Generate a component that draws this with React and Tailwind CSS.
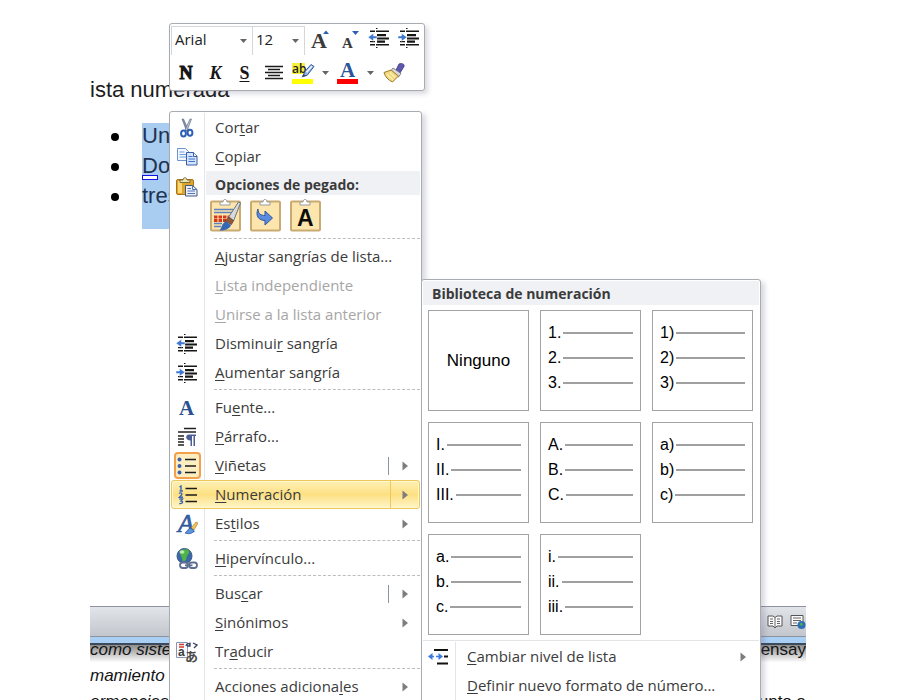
import React from "react";

/* ---------- small glyphs ---------- */

const Caret = ({ className = "" }) => (
  <svg width="7" height="4" viewBox="0 0 7 4" className={className} aria-hidden="true">
    <path d="M0 0h7L3.5 4z" fill="#666" />
  </svg>
);

const Arrow = () => (
  <svg width="6" height="10" viewBox="0 0 6 10" aria-hidden="true">
    <path d="M0.5 0.5L6 5L0.5 9.500z" fill="#7d7d7d" />
  </svg>
);

const Indent = ({ more = false }) => (
  <svg width="22" height="20" viewBox="0 0 22 20" aria-hidden="true">
    <path
      d="M8 0h1.500v1H8zM8 19h1.500v1H8zM2 2.500h5V4H2zM8 2.500h13V4H8zM9 6h9v2.200H9zM9 9.500h12v2H9zM9 12.600h8v2.200H9zM2 16h5v1.500H2zM8 16h13v1.500H8zM2 13h5v1.200H2z"
      fill="#161616"
    />
    {more ? (
      <path d="M0 8h3.500V5.200L9 9.300l-5.500 4v-2.800H0z" fill="#3f78d0" stroke="#fff" strokeWidth="0.500" />
    ) : (
      <path d="M9 8H5.500V5.200L0 9.300l5.500 4v-2.800H9z" fill="#3f78d0" stroke="#fff" strokeWidth="0.500" />
    )}
  </svg>
);

const Serif = ({ size, fill, x, y, children, italic, bold = true, stroke }) => (
  <text
    x={x}
    y={y}
    fontFamily="Liberation Serif, serif"
    fontSize={size}
    fontWeight={bold ? 700 : 400}
    fontStyle={italic ? "italic" : "normal"}
    fill={fill}
    stroke={stroke}
    strokeWidth="0.700"
  >
    {children}
  </text>
);

const GrowFont = () => (
  <svg width="22" height="22" viewBox="0 0 22 22" aria-hidden="true">
    <Serif size="22" x="2" y="19" fill="#3a3a3a">A</Serif>
    <path d="M14 5L17 1.500L20 5z" fill="#2f5fb5" />
  </svg>
);
const ShrinkFont = () => (
  <svg width="22" height="22" viewBox="0 0 22 22" aria-hidden="true">
    <Serif size="15" x="3" y="19" fill="#3a3a3a">A</Serif>
    <path d="M13 2h7l-3.500 4z" fill="#2f5fb5" />
  </svg>
);
const Center = () => (
  <svg width="20" height="16" viewBox="0 0 20 16" aria-hidden="true">
    <path d="M1 1.500h18M4 4.500h12M1 7.500h18M4 10.500h12M1 13.500h18" stroke="#1b1b1b" strokeWidth="1.500" />
  </svg>
);
const Highlighter = () => (
  <svg width="23" height="22" viewBox="0 0 23 22" aria-hidden="true">
    <rect x="0" y="1" width="13" height="11" fill="#f6f03c" />
    <text x="0" y="11" fontFamily="Open Sans, sans-serif" fontSize="12" fontWeight="600" fill="#222">ab</text>
    <path d="M11 14l2-4.500 6-7 3 2-7 9z" fill="#8fb1e3" stroke="#355a9a" strokeWidth="1" />
    <path d="M14 9.500l5.500-6 1 1-5.500 6.500z" fill="#eef4ff" />
    <path d="M9.500 15.500l2-3.500 2.500 2z" fill="#39445c" />
    <rect x="0" y="17" width="21" height="5" fill="#ffff00" />
  </svg>
);
const FontColor = () => (
  <svg width="22" height="22" viewBox="0 0 22 22" aria-hidden="true">
    <Serif size="21" x="3" y="15" fill="#2b549c">A</Serif>
    <rect x="0" y="17" width="21" height="5" fill="#f00" />
  </svg>
);
const FormatBrush = () => (
  <svg width="22" height="20" viewBox="0 0 22 20" aria-hidden="true">
    <path d="M13 7l3-6c2-1.500 6 0 5 2.500l-4 6.500z" fill="#5e58ad" stroke="#3b3780" strokeWidth="0.800" />
    <path d="M10 5l8 5.500-2.500 3.500-8-5.500z" fill="#d9dbe0" stroke="#6b6b75" strokeWidth="0.800" />
    <path d="M8 7L1 9.500c1 4 4 7.500 8.500 9.500l6-6z" fill="#f2d87c" stroke="#9c7a2a" strokeWidth="1" />
    <path d="M4 11l6 6M7 9.500l5 5" stroke="#fbf0bd" strokeWidth="1.200" />
  </svg>
);

const Scissors = () => (
  <svg width="16" height="20" viewBox="0 0 16 20" aria-hidden="true">
    <path d="M3 1l1.500 0 5 11-2 1z" fill="#8592a8" stroke="#566580" strokeWidth="0.600" />
    <path d="M12.500 1L11 1 6 12l2 1z" fill="#b9c3d3" stroke="#566580" strokeWidth="0.600" />
    <ellipse cx="4.500" cy="15.500" rx="2.400" ry="3" fill="none" stroke="#2e5fb4" strokeWidth="2" />
    <ellipse cx="11" cy="14.800" rx="2.400" ry="3" fill="none" stroke="#2e5fb4" strokeWidth="2" />
  </svg>
);
const Copy = () => (
  <svg width="21" height="19" viewBox="0 0 21 19" aria-hidden="true">
    <path d="M.5 1.500h8l3 3v9H.5z" fill="#f2f7ff" stroke="#6f93cc" />
    <path d="M2.500 5h5M2.500 7.500h7M2.500 10h7" stroke="#6f9be0" />
    <path d="M9.500 5.500h7l3.500 3.500v9H9.500z" fill="#d5e3fd" stroke="#3b5fa5" />
    <path d="M16.500 5.500v4H20" fill="#fff" stroke="#3b5fa5" />
    <path d="M11.500 9.500h4M11.500 12h6.500M11.500 14.500h6.500" stroke="#3d74d0" />
  </svg>
);
const Paste = () => (
  <svg width="22" height="20" viewBox="0 0 22 20" aria-hidden="true">
    <rect x="0.500" y="2.500" width="17" height="15" rx="1.500" fill="#dfa52a" stroke="#a9741a" />
    <path d="M2 4h4v12H2z" fill="#f8d976" />
    <path d="M4 5.500V3h3c0-3 4-3 4 0h3v2.500z" fill="#ebe3b4" stroke="#6f6530" strokeWidth="0.900" />
    <path d="M9.500 8.500h7l4.500 4v6.500H9.500z" fill="#e9effa" stroke="#43567c" />
    <path d="M16.500 8.500v4H21M11.500 11.500h3.500M11.500 14h7.500M11.500 16.500h7.500" fill="none" stroke="#5575ad" />
  </svg>
);

const Board = ({ children }) => (
  <svg width="32" height="33" viewBox="0 0 32 33" aria-hidden="true">
    <rect x="2" y="2.500" width="29" height="29" rx="1" fill="#fde5ae" stroke="#c9ab72" strokeWidth="2" />
    <path d="M11 6V3h3c0-3.500 4-3.500 4 0h3v3z" fill="#fff" stroke="#9a9a9a" />
    {children}
  </svg>
);
const KeepFormat = () => (
  <Board>
    <path d="M5 10.500h19M5 13.500h19M5 24.500h8M5 27.500h7" stroke="#5f83bd" strokeWidth="1.400" />
    <path d="M5 18h17M5 21.500h12" fill="none" stroke="#d5391c" strokeWidth="2.800" strokeDasharray="3.500 1" />
    <path d="M19 19L29.500 3l2 1-7 18z" fill="#d7dadd" stroke="#6f7378" />
    <path d="M16 22l4-4 4.500 3.500-2 4z" fill="#8e5a3a" stroke="#5d3a26" strokeWidth="0.700" />
    <path d="M10 31.500c3-1 2-7.500 7-9l5 3.500c-1 4-7 6-12 5.500z" fill="#3567b7" />
  </Board>
);
const MergeFormat = () => (
  <Board>
    <path d="M9 10c0 5 3 6.500 7 6.500V12l7.500 7-7.500 7v-4.500C10 21.500 6 17 9 10z" fill="#5b8be0" stroke="#2d569f" />
  </Board>
);
const TextOnly = () => (
  <Board>
    <text x="8" y="27" fontFamily="Liberation Sans, sans-serif" fontSize="23" fontWeight="700" fill="#0c0c0c">A</text>
  </Board>
);

const FontIcon = () => (
  <svg width="20" height="20" viewBox="0 0 20 20" aria-hidden="true">
    <Serif size="21" x="2" y="17" fill="#2c4f90">A</Serif>
  </svg>
);
const Paragraph = () => (
  <svg width="20" height="20" viewBox="0 0 20 20" aria-hidden="true">
    <path d="M7 1.500h12M1 5h18M1 9h6M1 12h6M1 15h6M1 18h6" stroke="#222" strokeWidth="1.500" />
    <path d="M12 7.500h7V9h-1v10h-1.500V9H15v10h-1.500v-5.500C8 13.500 8 7.500 12 7.500z" fill="#4a5f96" />
  </svg>
);
const Bullets = () => (
  <svg width="20" height="20" viewBox="0 0 20 20" aria-hidden="true">
    <path d="M8 3.500h11M8 10h11M8 16.500h11" stroke="#1d1d1d" strokeWidth="1.700" />
    <g fill="#3c5fae">
      <circle cx="2.500" cy="3.500" r="2" />
      <circle cx="2.500" cy="10" r="2" />
      <circle cx="2.500" cy="16.500" r="2" />
    </g>
  </svg>
);
const Numbers = () => (
  <svg width="20" height="20" viewBox="0 0 20 20" aria-hidden="true">
    <path d="M7.500 3.500H19M7.500 10H19M7.500 16.500H19" stroke="#1d1d1d" strokeWidth="1.700" />
    <path
      d="M1.500 2L3 1v5M1.500 6h3.500M1 8.500c2-1.500 3.500 0 2.500 1.500L1.500 12.200H5M1.200 14h3.300L3 16c2.500 0 2 3-1.800 2.600"
      fill="none"
      stroke="#3c68b8"
      strokeWidth="1.400"
    />
  </svg>
);
const Styles = () => (
  <svg width="22" height="22" viewBox="0 0 22 22" aria-hidden="true">
    <Serif size="26" x="2" y="19" fill="#3463ad" stroke="#2f5494" italic bold={false}>A</Serif>
    <path d="M15 15l5-6 2 1-4 7z" fill="#efc35c" stroke="#a5782a" strokeWidth="0.600" />
    <path d="M9 20c2-1 3-5 6-5l3 2.500c-1 3-5 4-9 2.500z" fill="#5a93de" stroke="#2c5596" strokeWidth="0.800" />
  </svg>
);
const Globe = () => (
  <svg width="22" height="22" viewBox="0 0 22 22" aria-hidden="true">
    <circle cx="8.500" cy="8" r="7.500" fill="#3a68a8" stroke="#3c5a86" />
    <path d="M5 2.500c3-2 7-1.500 8 .5s-1 3-2 5 0 4-2.500 5-2-2-3-4-2-4-.5-6.500z" fill="#4fb345" />
    <ellipse cx="6" cy="4" rx="2.500" ry="1.800" fill="#b8ecb0" />
    <g fill="#fff" stroke="#5f6f92" strokeWidth="1.800">
      <rect x="4" y="14.500" width="8" height="5.500" rx="2.700" />
      <rect x="13" y="14.500" width="8" height="5.500" rx="2.700" />
      <path d="M9 17.300h7.500" />
    </g>
  </svg>
);
const Translate = () => (
  <svg width="22" height="22" viewBox="0 0 22 22" aria-hidden="true">
    <path d="M.5 1.500h11v15H.5z" fill="#f7f9fd" stroke="#8796b3" />
    <path d="M3 3.500h5M3 6h5" stroke="#d13a2c" strokeWidth="1.400" />
    <text x="2" y="15" fontFamily="Liberation Sans, sans-serif" fontSize="12" fontWeight="700" fill="#3c3c3c">a</text>
    <path d="M10 5c1-3 3-3 4-1M14 1.500V5h-3M17 2l4 2-3 3" fill="none" stroke="#33415f" strokeWidth="1.300" />
    <text x="9" y="20" fontFamily="Noto Sans CJK JP, sans-serif" fontSize="13" fontWeight="700" fill="#4a4a4a">あ</text>
  </svg>
);
const ListLevel = () => (
  <svg width="21" height="18" viewBox="0 0 21 18" aria-hidden="true">
    <path d="M6 2h14M16 8.500h4M9 15.500h11" stroke="#111" strokeWidth="1.800" />
    <path d="M0 8.500L4.500 5v2.700h1.500v1.600H4.500V12zM15 8.500L10.500 5v2.700H8v1.600h2.500V12z" fill="#3f78e0" />
  </svg>
);
const Book = () => (
  <svg width="16" height="16" viewBox="0 0 16 16" aria-hidden="true">
    <path d="M1 2h5l2 1.500L10 2h5v10h-5l-2 2-2-2H1z" fill="#fafafa" stroke="#555" />
    <path d="M8 3.500V14M3 5h3M3 7.500h3M3 9.500h3M10 5h3M10 7.500h3M10 9.500h3" stroke="#666" />
  </svg>
);
const WebLayout = () => (
  <svg width="16" height="16" viewBox="0 0 16 16" aria-hidden="true">
    <path d="M1 1.500h12v10H1z" fill="#fafafa" stroke="#555" />
    <path d="M3 4h8M3 6.500h8M3 9h4" stroke="#666" />
    <circle cx="11.500" cy="11" r="4" fill="#2f6fb5" />
    <path d="M9.500 9.500c2-1.500 4 0 3 1.500s-2 1-3-1.500z" fill="#56b04a" />
  </svg>
);

/* ---------- menu parts ---------- */

/* The letter after "&" is the access key. */
const Label = ({ text }) => {
  const i = text.indexOf("&");
  if (i < 0) return <span>{text}</span>;
  return (
    <span>
      {text.slice(0, i)}
      <span className="underline decoration-1 underline-offset-2">{text[i + 1]}</span>
      {text.slice(i + 2)}
    </span>
  );
};

const Gutter = ({ children, className = "w-[35px]" }) => (
  <span className={`flex shrink-0 items-center justify-center self-stretch border-r border-[#e2e4e7] ${className}`}>
    {children}
  </span>
);

const Item = ({ icon, text, disabled, arrow, split, checked }) => (
  <button
    type="button"
    role="menuitem"
    disabled={disabled}
    className={`flex h-[29px] w-full items-center text-left ${disabled ? "text-[#a6a6a6]" : ""}`}
  >
    <Gutter>
      {checked ? (
        <span className="flex size-[27px] shrink-0 items-center justify-center rounded border-2 border-[#f2a04c] bg-[#fdeec2]">
          {icon}
        </span>
      ) : (
        icon
      )}
    </Gutter>
    <span className="flex-1 pl-[10px]">
      <Label text={text} />
    </span>
    {split && <span className="h-[18px] w-px bg-[#8a94a3]" />}
    {arrow && (
      <span className="flex w-8 items-center justify-center">
        <Arrow />
      </span>
    )}
  </button>
);

const ActiveItem = ({ icon, text }) => (
  <button
    type="button"
    role="menuitem"
    className="mx-px flex h-[29px] items-stretch self-stretch rounded-[3px] border border-[#ecc75a] bg-linear-to-b from-[#fef0b4] via-[#fde082] to-[#fff5c8] text-left inset-ring inset-ring-[#fff6d2]"
  >
    <span className="flex w-8 items-center justify-center">{icon}</span>
    <span className="flex flex-1 items-center pl-[11px]">
      <Label text={text} />
    </span>
    <span className="flex w-[29px] items-center justify-center border-l border-[#ecc75a]">
      <Arrow />
    </span>
  </button>
);

const Separator = () => (
  <div role="separator" className="flex h-[6px]">
    <Gutter />
    <span className="mt-[2px] ml-[9px] mr-px h-0 flex-1 border-t border-dashed border-[#bdbdbd]" />
  </div>
);

const ToolButton = ({ label, className, children }) => (
  <button type="button" aria-label={label} className={`flex h-7 items-center justify-center ${className}`}>
    {children}
  </button>
);

const Combo = ({ label, value, className }) => (
  <div className={`relative h-[29px] border border-[#d3d6db] ${className}`}>
    <select
      aria-label={label}
      defaultValue={value}
      className="size-full appearance-none bg-white pb-1 pl-[3px] text-[15px] text-[#222] outline-none"
    >
      <option>{value}</option>
    </select>
    <Caret className="pointer-events-none absolute top-3 right-[5px]" />
  </div>
);

const MiniToolbar = () => (
  <div
    role="toolbar"
    aria-label="Formato"
    className="absolute top-[23px] left-[169px] flex w-[256px] flex-col rounded-[3px] border border-[#a7abb2] bg-white px-px pt-[2px] pb-[3px] shadow-[3px_3px_5px_rgba(90,80,120,0.22)]"
  >
    <div className="flex items-start">
      <Combo label="Fuente" value="Arial" className="w-[82px]" />
      <Combo label="Tamaño" value="12" className="-ml-px w-[53px]" />
      <ToolButton label="Agrandar fuente" className="w-[30px]"><GrowFont /></ToolButton>
      <ToolButton label="Encoger fuente" className="w-[29px]"><ShrinkFont /></ToolButton>
      <ToolButton label="Disminuir sangría" className="w-[30px] pb-1"><Indent /></ToolButton>
      <ToolButton label="Aumentar sangría" className="w-[29px] pb-1"><Indent more /></ToolButton>
    </div>
    <div className="mt-1 flex items-center font-['Liberation_Serif',serif] text-[18px] font-bold text-[#161616]">
      <ToolButton label="Negrita" className="w-[30px] [-webkit-text-stroke:1px_#161616]">N</ToolButton>
      <ToolButton label="Cursiva" className="w-[29px] italic">K</ToolButton>
      <ToolButton label="Subrayado" className="w-[29px] underline underline-offset-2">S</ToolButton>
      <ToolButton label="Centrar" className="w-[29px]"><Center /></ToolButton>
      <ToolButton label="Resaltado" className="w-[30px]"><Highlighter /></ToolButton>
      <ToolButton label="Más resaltado" className="w-[15px]"><Caret /></ToolButton>
      <ToolButton label="Color de fuente" className="w-[30px]"><FontColor /></ToolButton>
      <ToolButton label="Más colores" className="w-[15px]"><Caret /></ToolButton>
      <ToolButton label="Copiar formato" className="w-[32px]"><FormatBrush /></ToolButton>
    </div>
  </div>
);

const ContextMenu = () => (
  <div
    role="menu"
    className="absolute top-[111px] left-[169px] flex w-[253px] flex-col rounded-t-[3px] border border-[#a7abb2] bg-white pt-px text-[15px] shadow-[4px_3px_5px_rgba(90,80,120,0.22)]"
  >
    <Item icon={<Scissors />} text="Cor&tar" />
    <Item icon={<Copy />} text="&Copiar" />
    <div className="flex">
      <Gutter>
        <span className="self-start pt-[6px]"><Paste /></span>
      </Gutter>
      <div className="flex-1">
        <div className="mr-px ml-px flex h-6 items-center bg-[#eff1f5] pt-[2px] pl-[9px] text-[14px] font-bold">
          Opciones de pegado:
        </div>
        <div className="flex h-[41px] items-center gap-2 pl-1">
          <button type="button" aria-label="Mantener formato de origen"><KeepFormat /></button>
          <button type="button" aria-label="Combinar formato"><MergeFormat /></button>
          <button type="button" aria-label="Mantener solo texto"><TextOnly /></button>
        </div>
      </div>
    </div>
    <Separator />
    <Item text="&Ajustar sangrías de lista..." />
    <Item text="&Lista independiente" disabled />
    <Item text="&Unirse a la lista anterior" disabled />
    <Item icon={<Indent />} text="Disminui&r sangría" />
    <Item icon={<Indent more />} text="&Aumentar sangría" />
    <Separator />
    <Item icon={<FontIcon />} text="Fu&ente..." />
    <Item icon={<Paragraph />} text="&Párrafo..." />
    <Item icon={<Bullets />} text="&Viñetas" arrow split checked />
    <ActiveItem icon={<Numbers />} text="&Numeración" />
    <Item icon={<Styles />} text="Es&tilos" arrow />
    <Separator />
    <Item icon={<Globe />} text="&Hipervínculo..." />
    <Separator />
    <Item text="Bus&car" arrow split />
    <Item text="&Sinónimos" arrow />
    <Item icon={<Translate />} text="Tr&aducir" />
    <Separator />
    <Item text="Acciones adiciona&les" arrow />
  </div>
);

const FORMATS = [
  ["1.", "2.", "3."],
  ["1)", "2)", "3)"],
  ["I.", "II.", "III."],
  ["A.", "B.", "C."],
  ["a)", "b)", "c)"],
  ["a.", "b.", "c."],
  ["i.", "ii.", "iii."],
];

const NumberingMenu = () => (
  <div
    role="menu"
    className="absolute top-[279px] left-[421px] w-[340px] rounded-t-[3px] border border-[#a7abb2] bg-white text-[15px] shadow-[4px_3px_5px_rgba(90,80,120,0.22)]"
  >
    <div className="mx-px mt-px flex h-6 items-center bg-[#eff1f5] pt-px pl-[9px] text-[14px] font-bold">
      Biblioteca de numeración
    </div>
    <div className="grid grid-cols-3 gap-[11px] pt-[5px] pr-[7px] pb-[5px] pl-[6px] font-['Liberation_Sans',sans-serif] text-base text-black">
      <button type="button" className="h-[101px] border border-[#a3a3a3] text-[17px]">Ninguno</button>
      {FORMATS.map((rows) => (
        <button
          key={rows[0]}
          type="button"
          className="flex h-[101px] flex-col border border-[#a3a3a3] pt-[9px] pr-[7px] pl-[7px]"
        >
          {rows.map((r) => (
            <span key={r} className="flex h-[25px] w-full items-center gap-[2px]">
              {r}
              <span className="h-[2px] flex-1 bg-[#a0a0a0]" />
            </span>
          ))}
        </button>
      ))}
    </div>
    <div className="mx-px h-[2px] border-t border-[#e2e4e7]" />
    <button type="button" role="menuitem" className="flex h-[29px] w-full items-center text-left">
      <Gutter className="w-[34px]"><ListLevel /></Gutter>
      <span className="flex-1 pl-[11px]"><Label text="&Cambiar nivel de lista" /></span>
      <span className="flex w-[34px] items-center justify-center"><Arrow /></span>
    </button>
    <button type="button" role="menuitem" className="flex h-[29px] w-full items-center text-left">
      <Gutter className="w-[34px]" />
      <span className="flex-1 pl-[11px]"><Label text="&Definir nuevo formato de número..." /></span>
    </button>
  </div>
);

const Bullet = ({ children, last }) => (
  <li className="flex">
    <span className="flex h-[27px] w-[52px] items-center">
      <span className="ml-[21px] size-2 rounded-full bg-black" />
    </span>
    <span className={`relative w-20 bg-[#a9ccf1] leading-[26px] ${last ? "h-[46px]" : "h-[30px]"}`}>{children}</span>
  </li>
);

export default function App() {
  return (
    <div className="relative h-screen overflow-hidden bg-white font-['Open_Sans','Noto_Sans',sans-serif] text-[#3b3b3b]">
      <main className="mr-[94px] ml-[90px] overflow-hidden font-['Liberation_Sans',sans-serif]">
        <h1 className="pt-[76px] text-[22px] leading-[27px] text-[#1c1c1c]">ista numerada</h1>
        <ul className="mt-5 text-[22px] text-[#1d3350]">
          <Bullet>Un</Bullet>
          <Bullet>
            Do
            <span className="absolute top-[22px] left-0 h-[5px] w-4 border border-[#1414e6] bg-white" />
          </Bullet>
          <Bullet last>tres</Bullet>
        </ul>
        <div className="mt-[377px] flex h-[31px] items-center justify-end gap-[7px] border-y border-[#8c939c] bg-linear-to-b from-[#e1e4e8] to-[#c3c7cd]">
          <span className="h-5 w-[2px] bg-[#e3a64a]" />
          <Book />
          <WebLayout />
        </div>
        <div className="h-[8px] border-b-2 border-[#3c4a5c] bg-[#a9cff5]" />
        <div className="bg-linear-to-b from-[#8d8d8d] via-white via-25% to-white text-[17px] whitespace-nowrap text-[#141414]">
          <div className="flex h-[18px] justify-between overflow-hidden leading-[10px]">
            <em>como sistema</em>
            <span>ensay</span>
          </div>
          <em className="block h-[26px] leading-[26px]">mamiento</em>
          <div className="flex h-[26px] items-center justify-between">
            <em>ormencias</em>
            <span>unto a</span>
          </div>
        </div>
      </main>
      <MiniToolbar />
      <ContextMenu />
      <NumberingMenu />
    </div>
  );
}
